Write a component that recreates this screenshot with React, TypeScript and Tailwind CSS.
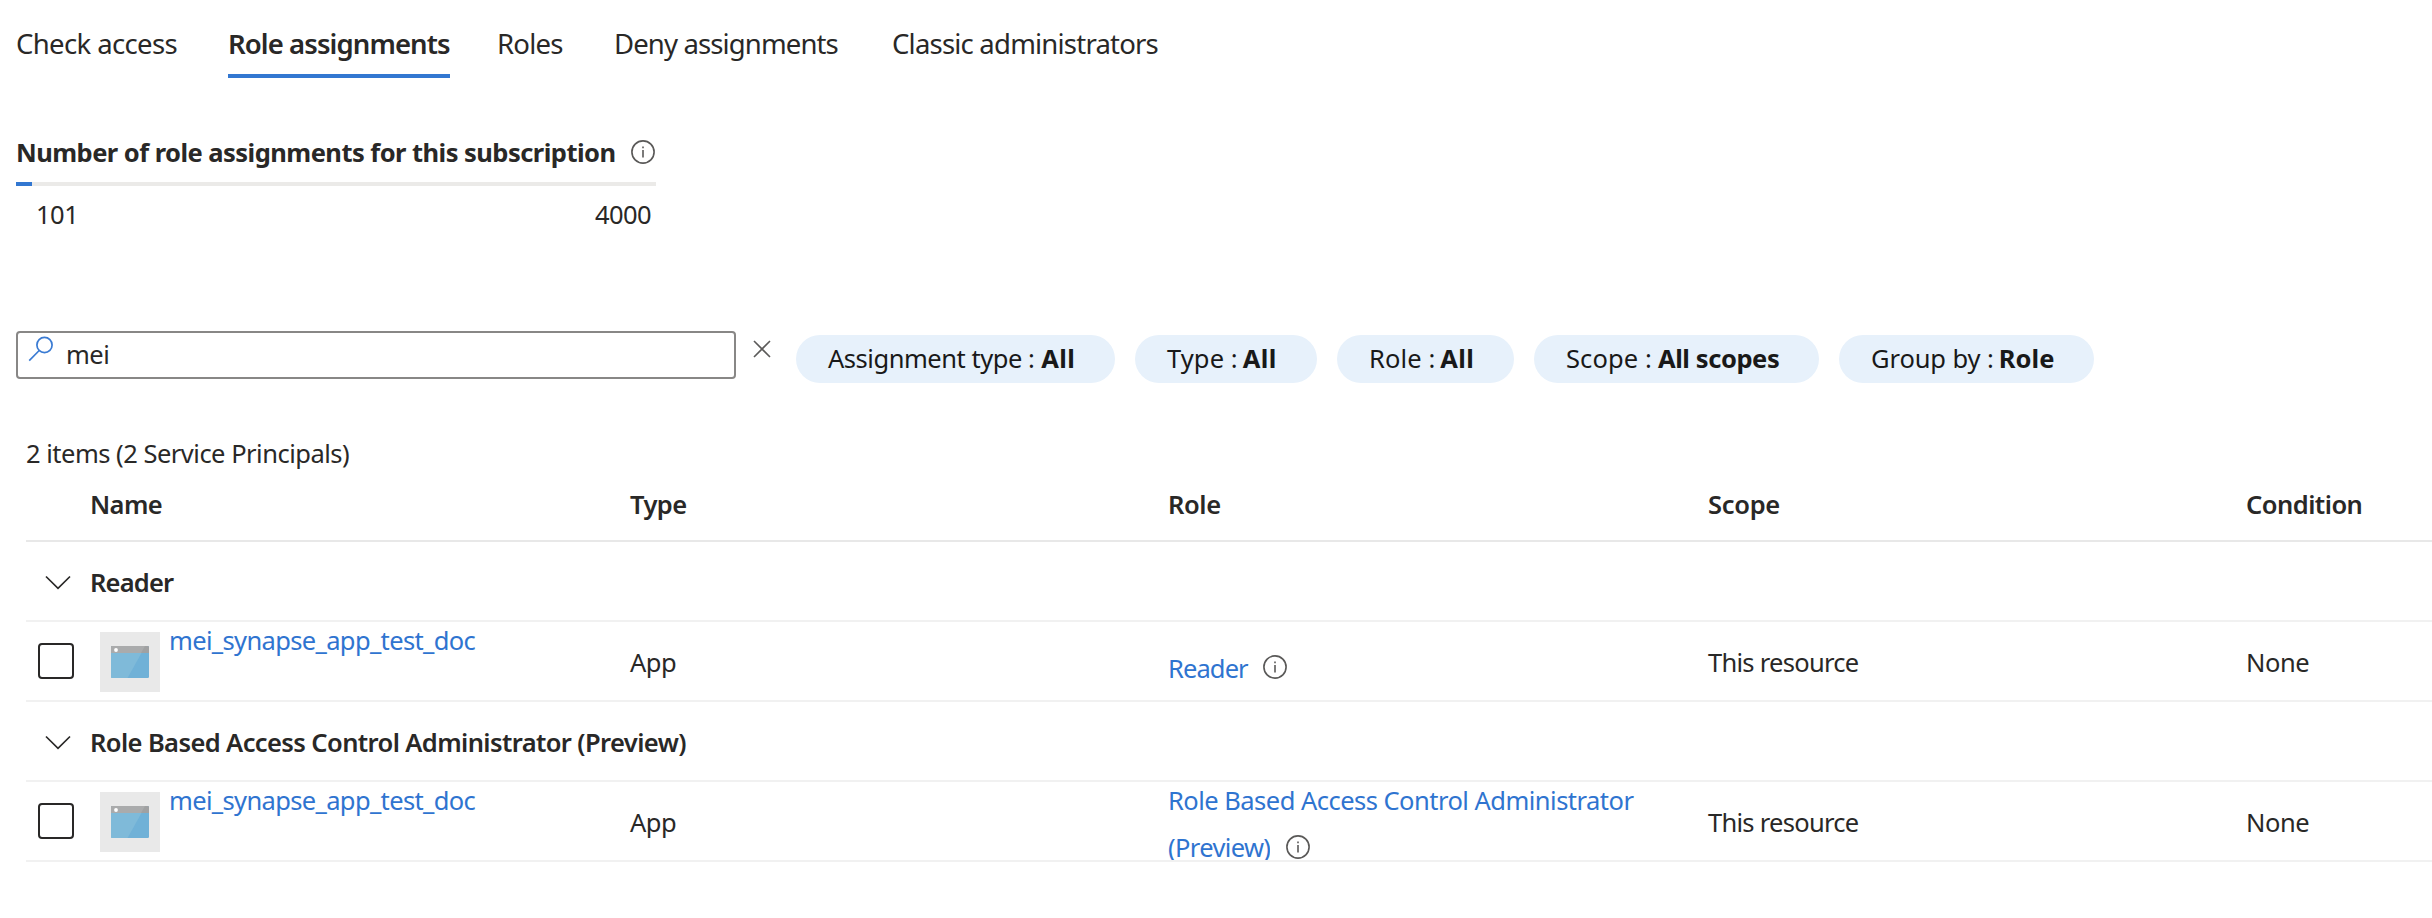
import React from "react";

function InfoIcon({ className = "" }: { className?: string }) {
  return (
    <svg viewBox="0 0 24 24" className={`size-6 shrink-0 ${className}`} fill="none" stroke="#5a5958" strokeWidth="1.6">
      <circle cx="12" cy="12" r="11.1" />
      <path d="M12 10v7.5" />
      <path d="M12 6.4v1.8" />
    </svg>
  );
}

function Chevron() {
  return (
    <svg viewBox="0 0 26 16" className="mt-8 ml-[19px] h-4 w-[26px]" fill="none" stroke="#292827" strokeWidth="1.7">
      <path d="M1 2.5 13 14.3 25 2.5" />
    </svg>
  );
}

function AppIcon() {
  return (
    <div className="mt-[10px] ml-[10px] flex h-[60px] w-[60px] shrink-0 bg-[#e9e9e9]">
      <svg viewBox="0 0 38 32" className="mt-[14px] ml-[11px] h-8 w-[38px]">
        <rect width="38" height="32" rx="1.2" fill="#70b1d7" />
        <path d="M0 7h30.5L16.5 32H1.2A1.2 1.2 0 0 1 0 30.8Z" fill="#7fbad9" />
        <path d="M1.2 0h35.6A1.2 1.2 0 0 1 38 1.2V7H0V1.2A1.2 1.2 0 0 1 1.2 0Z" fill="#a0a1a2" />
        <path d="M1.2 0H34l-4 7H0V1.2A1.2 1.2 0 0 1 1.2 0Z" fill="#aaabac" />
        <circle cx="5" cy="4" r="1.9" fill="#fff" />
      </svg>
    </div>
  );
}

const pills = [
  { label: "Assignment type :", value: "All", box: "w-[319px] gap-[7px]", l: "tracking-[-0.47px]", v: "tracking-[0.3px]" },
  { label: "Type :", value: "All", box: "w-[182px] gap-[5px]", l: "tracking-[0.1px]", v: "tracking-[0.3px]" },
  { label: "Role :", value: "All", box: "w-[177px] gap-[5px]", l: "tracking-[0.1px]", v: "tracking-[0.3px]" },
  { label: "Scope :", value: "All scopes", box: "w-[285px] gap-1.5", l: "tracking-[0.1px]", v: "tracking-[-0.41px]" },
  { label: "Group by :", value: "Role", box: "w-[255px] gap-[5px]", l: "tracking-[-0.1px]", v: "tracking-[0.1px]" },
];

const columns = "grid grid-cols-[64px_540px_538px_540px_538px_1fr] border-b-2";

function GroupRow({ title, spacing }: { title: string; spacing: string }) {
  return (
    <div className="flex h-20 border-b-2 border-[#f1f1f1]">
      <div className="w-16">
        <Chevron />
      </div>
      <div className={`leading-[80px] font-semibold ${spacing}`}>{title}</div>
    </div>
  );
}

function DataRow({ children }: { children: React.ReactNode }) {
  return (
    <div className={`${columns} h-20 border-[#f1f1f1]`}>
      <div className="mt-[21px] ml-3 size-9 rounded-[4px] border-2 border-[#292827]" />
      <div className="flex">
        <AppIcon />
        <a className="ml-[9px] leading-9 tracking-[-0.65px] text-[#2f74d0]">mei_synapse_app_test_doc</a>
      </div>
      <div className="leading-[80px] tracking-[-0.5px]">App</div>
      <div className="h-[78px] text-[#2f74d0]">{children}</div>
      <div className="leading-[80px] tracking-[-0.72px]">This resource</div>
      <div className="leading-[80px] tracking-[-0.4px]">None</div>
    </div>
  );
}

export default function App() {
  return (
    <div className="h-[918px] w-full overflow-hidden bg-white pt-6 font-['Noto_Sans',sans-serif] text-[25.5px] whitespace-nowrap text-[#292827]">
      <nav className="flex h-[54px] pl-4 text-[27.5px] leading-10">
        <div className="w-[212px] tracking-[-0.63px]">Check access</div>
        <div className="w-[269px]">
          <div className="h-[54px] w-[222px] border-b-4 border-[#3277d1] font-semibold tracking-[-0.91px]">Role assignments</div>
        </div>
        <div className="w-[117px] tracking-[-0.76px]">Roles</div>
        <div className="w-[278px] tracking-[-0.87px]">Deny assignments</div>
        <div className="tracking-[-0.79px]">Classic administrators</div>
      </nav>

      <section className="mt-14 ml-4 w-[640px] leading-9">
        <div className="flex items-center justify-between">
          <h2 className="font-bold tracking-[-0.53px]">Number of role assignments for this subscription</h2>
          <InfoIcon className="mr-px" />
        </div>
        <div className="mt-3 h-1 bg-[#ebeae8]">
          <div className="h-1 w-4 bg-[#3277d1]" />
        </div>
        <div className="mt-2.5 flex justify-between pr-[5px] pl-5">
          <span className="tracking-[-0.5px]">101</span>
          <span className="tracking-[-0.59px]">4000</span>
        </div>
      </section>

      <section className="mt-[99px] ml-4 flex items-start">
        <div className="flex h-12 w-[720px] rounded-[4px] border-2 border-[#888786]">
          <svg viewBox="0 0 26 26" className="mt-[3px] ml-[10px] size-[26px]" fill="none" stroke="#3a7bd3" strokeWidth="1.7">
            <circle cx="16.5" cy="9" r="7.6" />
            <path d="M11.2 14.5 1.2 24.6" />
          </svg>
          <span className="ml-3 leading-[42px] tracking-[-0.5px]">mei</span>
        </div>
        <svg viewBox="0 0 18 18" className="mt-[9px] ml-[17px] size-[18px]" fill="none" stroke="#5b5a59" strokeWidth="1.6">
          <path d="m1 1 16 16M17 1 1 17" />
        </svg>
        <div className="mt-1 ml-[25px] flex gap-5 text-[#191919]">
          {pills.map((p) => (
            <div key={p.label} className={`flex h-12 rounded-full bg-[#e7f1fb] pl-8 leading-[46px] ${p.box}`}>
              <span className={p.l}>{p.label}</span>
              <span className={`font-bold ${p.v}`}>{p.value}</span>
            </div>
          ))}
        </div>
      </section>

      <section className="mt-[52px] ml-[26px]">
        <div className="h-9 leading-9 tracking-[-0.5px]">2 items (2 Service Principals)</div>
        <div className={`${columns} h-[71px] border-[#e8e8e8] leading-[66px] font-semibold`}>
          <span />
          <span className="tracking-[-0.61px]">Name</span>
          <span className="tracking-[-0.6px]">Type</span>
          <span className="tracking-[-0.4px]">Role</span>
          <span className="tracking-[-0.3px]">Scope</span>
          <span className="tracking-[-0.52px]">Condition</span>
        </div>
        <GroupRow title="Reader" spacing="tracking-[-0.8px]" />
        <DataRow>
          <div className="flex pt-[23px] leading-[47px]">
            <a className="tracking-[-0.9px]">Reader</a>
            <InfoIcon className="mt-[10px] ml-[15px]" />
          </div>
        </DataRow>
        <GroupRow title="Role Based Access Control Administrator (Preview)" spacing="tracking-[-0.6px]" />
        <DataRow>
          <a className="block leading-9 tracking-[-0.52px]">Role Based Access Control Administrator</a>
          <div className="flex h-[42px] leading-[58px]">
            <a className="h-[42px] overflow-hidden tracking-[-0.64px]">(Preview)</a>
            <InfoIcon className="mt-[17px] ml-4" />
          </div>
        </DataRow>
      </section>
    </div>
  );
}
